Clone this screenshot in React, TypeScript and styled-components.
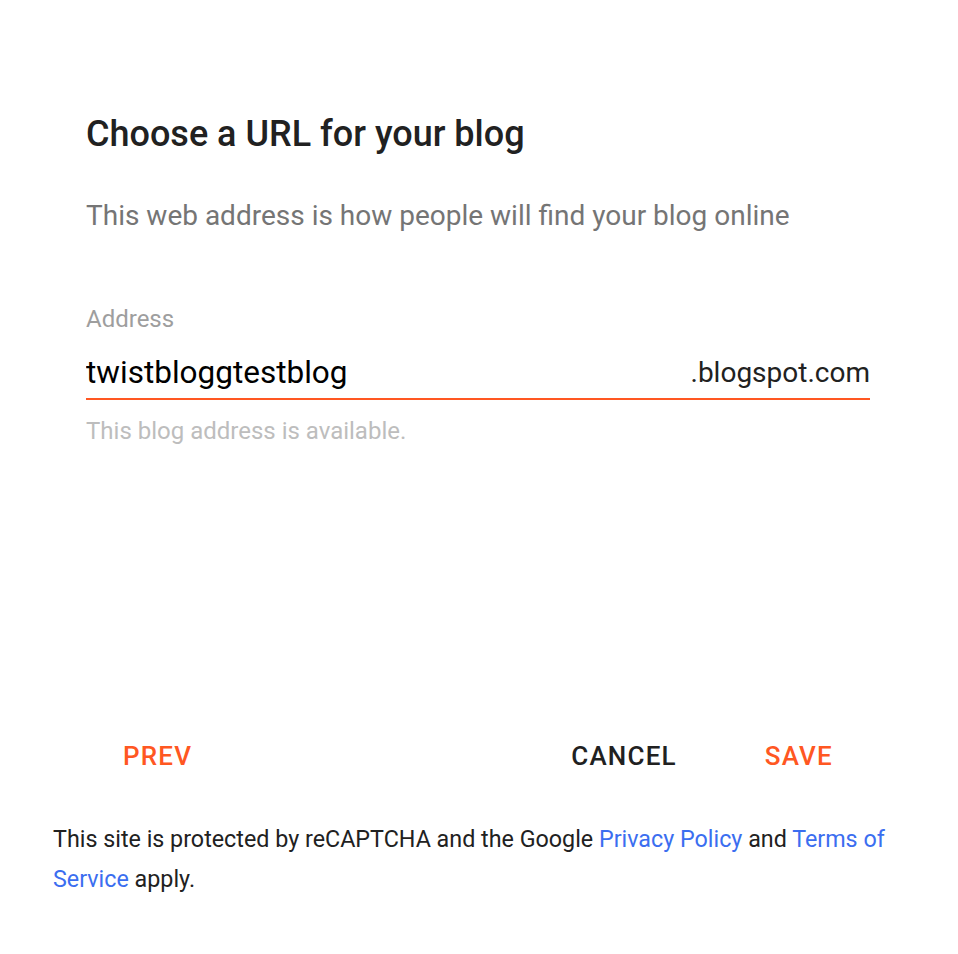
import styled, { createGlobalStyle } from "styled-components";

const GlobalStyle = createGlobalStyle`
  body {
    margin: 0;
    background: #fff;
    font-family: Roboto, "Liberation Sans", sans-serif;
  }
`;

const Page = styled.div`
  width: 958px;
  min-height: 954px;
  display: flex;
  flex-direction: column;
`;

const Dialog = styled.div`
  display: flex;
  flex-direction: column;
  padding: 112px 88px 0 86px;
`;

const Title = styled.h1`
  margin: 0;
  font-size: 36px;
  font-weight: 500;
  line-height: 44px;
  color: #212121;
`;

const Subtitle = styled.p`
  margin: 42px 0 0;
  font-size: 28px;
  line-height: 36px;
  color: #757575;
`;

const Field = styled.div`
  display: flex;
  flex-direction: column;
  margin-top: 70px;
`;

const Label = styled.label`
  font-size: 24px;
  line-height: 30px;
  color: #9e9e9e;
`;

const InputRow = styled.div`
  display: flex;
  align-items: center;
  justify-content: space-between;
  margin-top: 19px;
  padding-bottom: 5px;
  border-bottom: 2px solid #ff5722;
`;

const Input = styled.input`
  flex: 1;
  min-width: 0;
  border: none;
  outline: none;
  padding: 0;
  font-family: inherit;
  font-size: 31.5px;
  line-height: 40px;
  height: 40px;
  color: #000;
  background: transparent;
`;

const Suffix = styled.span`
  font-size: 28px;
  line-height: 40px;
  color: #212121;
`;

const Hint = styled.div`
  margin-top: 16px;
  font-size: 24px;
  line-height: 30px;
  color: #bdbdbd;
`;

const Actions = styled.div`
  display: flex;
  align-items: center;
  gap: 14px;
  margin-top: 286px;
  padding: 0 88px 0 86px;
`;

const Spacer = styled.div`
  flex: 1;
`;

const TextButton = styled.button<{ $tone?: "accent" | "plain" }>`
  border: none;
  background: none;
  padding: 0 37px;
  height: 48px;
  font-family: inherit;
  font-size: 26px;
  font-weight: 500;
  letter-spacing: 1.2px;
  color: ${(p) => (p.$tone === "plain" ? "#212121" : "#ff5722")};
  cursor: pointer;
`;

const Footer = styled.p`
  margin: 39px 0 0;
  padding: 0 60px 0 53px;
  font-size: 23.3px;
  line-height: 40px;
  color: #212121;
`;

const Link = styled.a`
  color: #3b6ef0;
  text-decoration: none;
`;

export default function App() {
  return (
    <Page>
      <GlobalStyle />
      <Dialog>
        <Title>Choose a URL for your blog</Title>
        <Subtitle>This web address is how people will find your blog online</Subtitle>
        <Field>
          <Label>Address</Label>
          <InputRow>
            <Input defaultValue="twistbloggtestblog" />
            <Suffix>.blogspot.com</Suffix>
          </InputRow>
          <Hint>This blog address is available.</Hint>
        </Field>
      </Dialog>
      <Actions>
        <TextButton $tone="accent">PREV</TextButton>
        <Spacer />
        <TextButton $tone="plain">CANCEL</TextButton>
        <TextButton $tone="accent">SAVE</TextButton>
      </Actions>
      <Footer>
        This site is protected by reCAPTCHA and the Google{" "}
        <Link href="#">Privacy Policy</Link> and <Link href="#">Terms of Service</Link> apply.
      </Footer>
    </Page>
  );
}
